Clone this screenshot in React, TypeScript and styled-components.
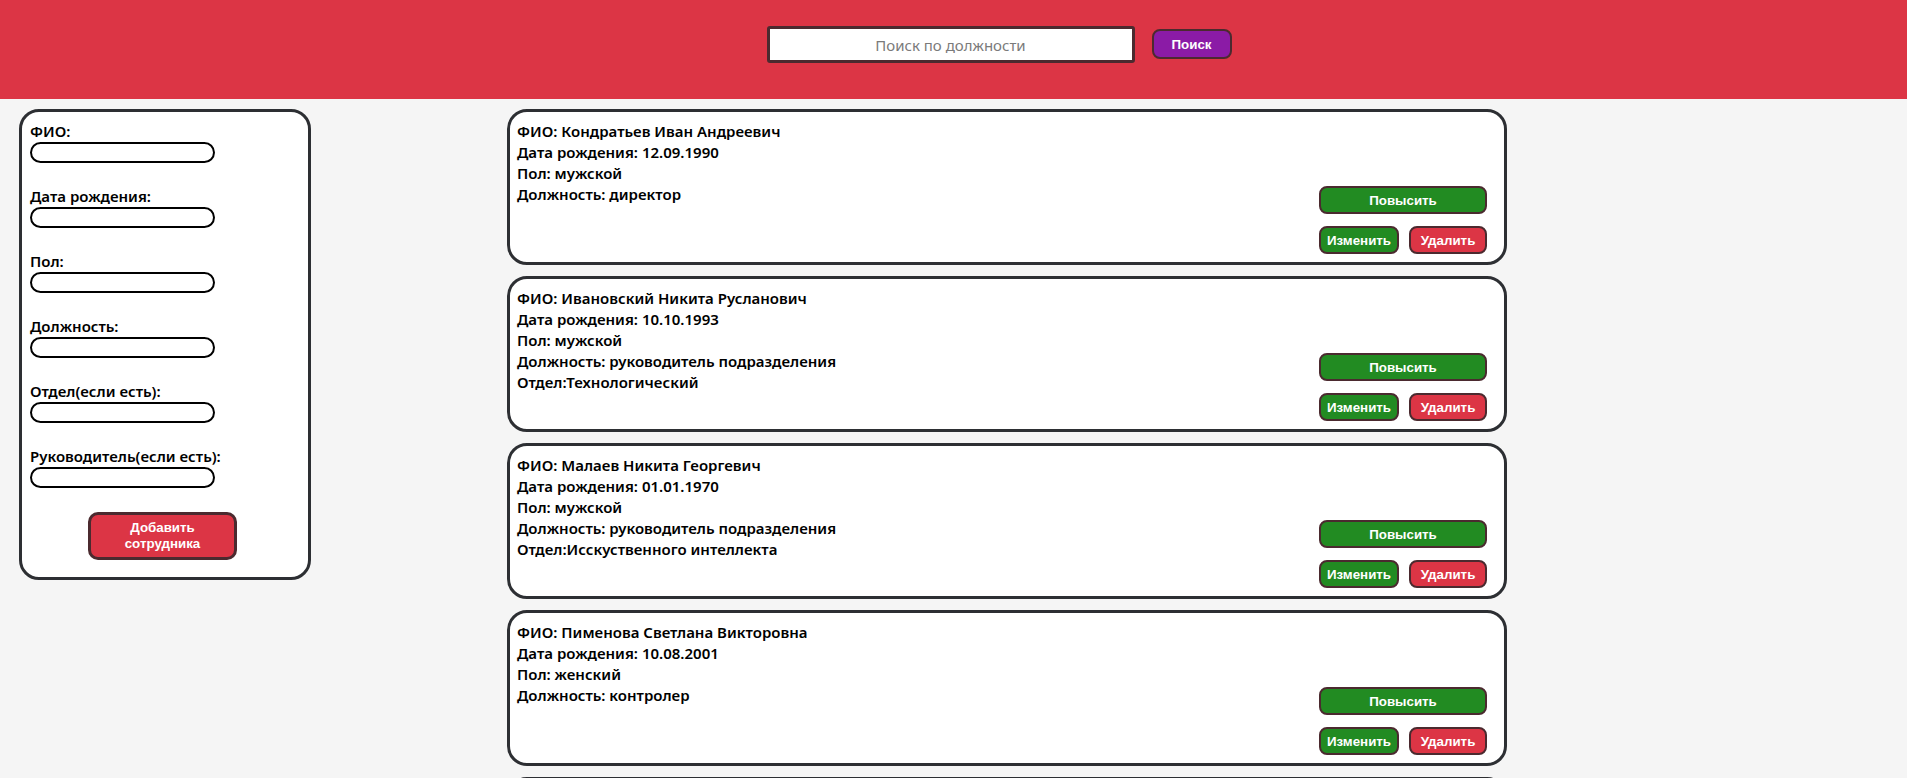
import React from "react";
import styled, { createGlobalStyle } from "styled-components";

const GlobalStyle = createGlobalStyle`
  html, body {
    margin: 0;
    padding: 0;
    background: #f5f5f5;
    font-family: "Noto Sans", "Open Sans", sans-serif;
    color: #000;
  }
  ::-webkit-scrollbar { width: 5px; }
  ::-webkit-scrollbar-track { background: #f1f1f1; }
  ::-webkit-scrollbar-thumb { background: #cdcdcd; }
`;

const Header = styled.header`
  background: #dc3545;
  height: 99px;
  box-sizing: border-box;
  padding: 26px 0 0 91px;
  display: flex;
  justify-content: center;
  align-items: flex-start;
  gap: 17px;
`;

const SearchInput = styled.input`
  width: 368px;
  height: 37px;
  box-sizing: border-box;
  border: 3px solid #4b2a2f;
  border-radius: 3px;
  background: #fff;
  font-family: "Noto Sans", "Open Sans", sans-serif;
  font-size: 15px;
  text-align: center;
  outline: none;
  &::placeholder { color: #7a7a7a; }
`;

const PurpleButton = styled.button`
  margin-top: 3px;
  width: 80px;
  height: 30px;
  box-sizing: border-box;
  background: #8b1ba6;
  border: 2px solid #4b2a2f;
  border-radius: 8px;
  color: #fff;
  font-family: "Liberation Sans", Arial, sans-serif;
  font-weight: 700;
  font-size: 13.33px;
`;

const Main = styled.main`
  display: grid;
  grid-template-columns: 292px 1000px;
  column-gap: 196px;
  align-items: start;
  padding: 10px 0 0 19px;
`;

const Panel = styled.form`
  box-sizing: border-box;
  background: #fff;
  border: 3px solid #2d2f33;
  border-radius: 20px;
  padding: 9px 8px 17px 8px;
  display: flex;
  flex-direction: column;
`;

const Field = styled.label`
  display: flex;
  flex-direction: column;
  align-items: flex-start;
  font-size: 15px;
  font-weight: 600;
  line-height: 21px;
  margin-bottom: 23px;
`;

const FieldInput = styled.input`
  width: 185px;
  height: 21px;
  box-sizing: border-box;
  border: 2px solid #000;
  border-radius: 11px;
  background: #fff;
  margin: 0;
  padding: 0 8px;
  outline: none;
`;

const AddButton = styled.button`
  align-self: center;
  margin-top: 1px;
  margin-right: 5px;
  width: 149px;
  height: 48px;
  box-sizing: border-box;
  background: #dc3545;
  border: 3px solid #4b2a2f;
  border-radius: 10px;
  color: #fff;
  font-family: "Liberation Sans", Arial, sans-serif;
  font-weight: 700;
  font-size: 13.33px;
  line-height: 16px;
  padding: 0 24px;
`;

const List = styled.section`
  display: flex;
  flex-direction: column;
  gap: 11px;
`;

const Card = styled.article`
  box-sizing: border-box;
  height: 156px;
  background: #fff;
  border: 3px solid #2d2f33;
  border-radius: 20px;
  padding: 9px 17px 8px 7px;
  display: flex;
  justify-content: space-between;
`;

const Info = styled.div`
  font-size: 15px;
  font-weight: 600;
  line-height: 21px;
`;

const Actions = styled.div`
  width: 168px;
  display: flex;
  flex-direction: column;
  justify-content: flex-end;
  gap: 12px;
`;

const Row = styled.div`
  display: flex;
  justify-content: space-between;
`;

const ActionButton = styled.button<{ $tone: "green" | "red"; $w: number }>`
  width: ${(p) => p.$w}px;
  height: 28px;
  box-sizing: border-box;
  background: ${(p) => (p.$tone === "green" ? "#228b22" : "#dc3545")};
  border: 2px solid #4b2a2f;
  border-radius: 8px;
  color: #fff;
  font-family: "Liberation Sans", Arial, sans-serif;
  font-weight: 700;
  font-size: 13.33px;
  padding: 0;
`;

type Emp = { fio: string; date: string; sex: string; pos: string; dept?: string };

const employees: Emp[] = [
  { fio: "Кондратьев Иван Андреевич", date: "12.09.1990", sex: "мужской", pos: "директор" },
  { fio: "Ивановский Никита Русланович", date: "10.10.1993", sex: "мужской", pos: "руководитель подразделения", dept: "Технологический" },
  { fio: "Малаев Никита Георгевич", date: "01.01.1970", sex: "мужской", pos: "руководитель подразделения", dept: "Исскуственного интеллекта" },
  { fio: "Пименова Светлана Викторовна", date: "10.08.2001", sex: "женский", pos: "контролер" },
  { fio: "Смирнов Олег Петрович", date: "05.03.1985", sex: "мужской", pos: "инженер" },
];

const fields = ["ФИО:", "Дата рождения:", "Пол:", "Должность:", "Отдел(если есть):", "Руководитель(если есть):"];

export default function App() {
  return (
    <>
      <GlobalStyle />
      <Header>
        <SearchInput placeholder="Поиск по должности" />
        <PurpleButton>Поиск</PurpleButton>
      </Header>
      <Main>
        <Panel onSubmit={(e) => e.preventDefault()}>
          {fields.map((f) => (
            <Field key={f}>
              {f}
              <FieldInput />
            </Field>
          ))}
          <AddButton type="button">Добавить сотрудника</AddButton>
        </Panel>
        <List>
          {employees.map((e) => (
            <Card key={e.fio}>
              <Info>
                <div>ФИО: {e.fio}</div>
                <div>Дата рождения: {e.date}</div>
                <div>Пол: {e.sex}</div>
                <div>Должность: {e.pos}</div>
                {e.dept && <div>Отдел:{e.dept}</div>}
              </Info>
              <Actions>
                <ActionButton $tone="green" $w={168}>Повысить</ActionButton>
                <Row>
                  <ActionButton $tone="green" $w={80}>Изменить</ActionButton>
                  <ActionButton $tone="red" $w={78}>Удалить</ActionButton>
                </Row>
              </Actions>
            </Card>
          ))}
        </List>
      </Main>
    </>
  );
}
